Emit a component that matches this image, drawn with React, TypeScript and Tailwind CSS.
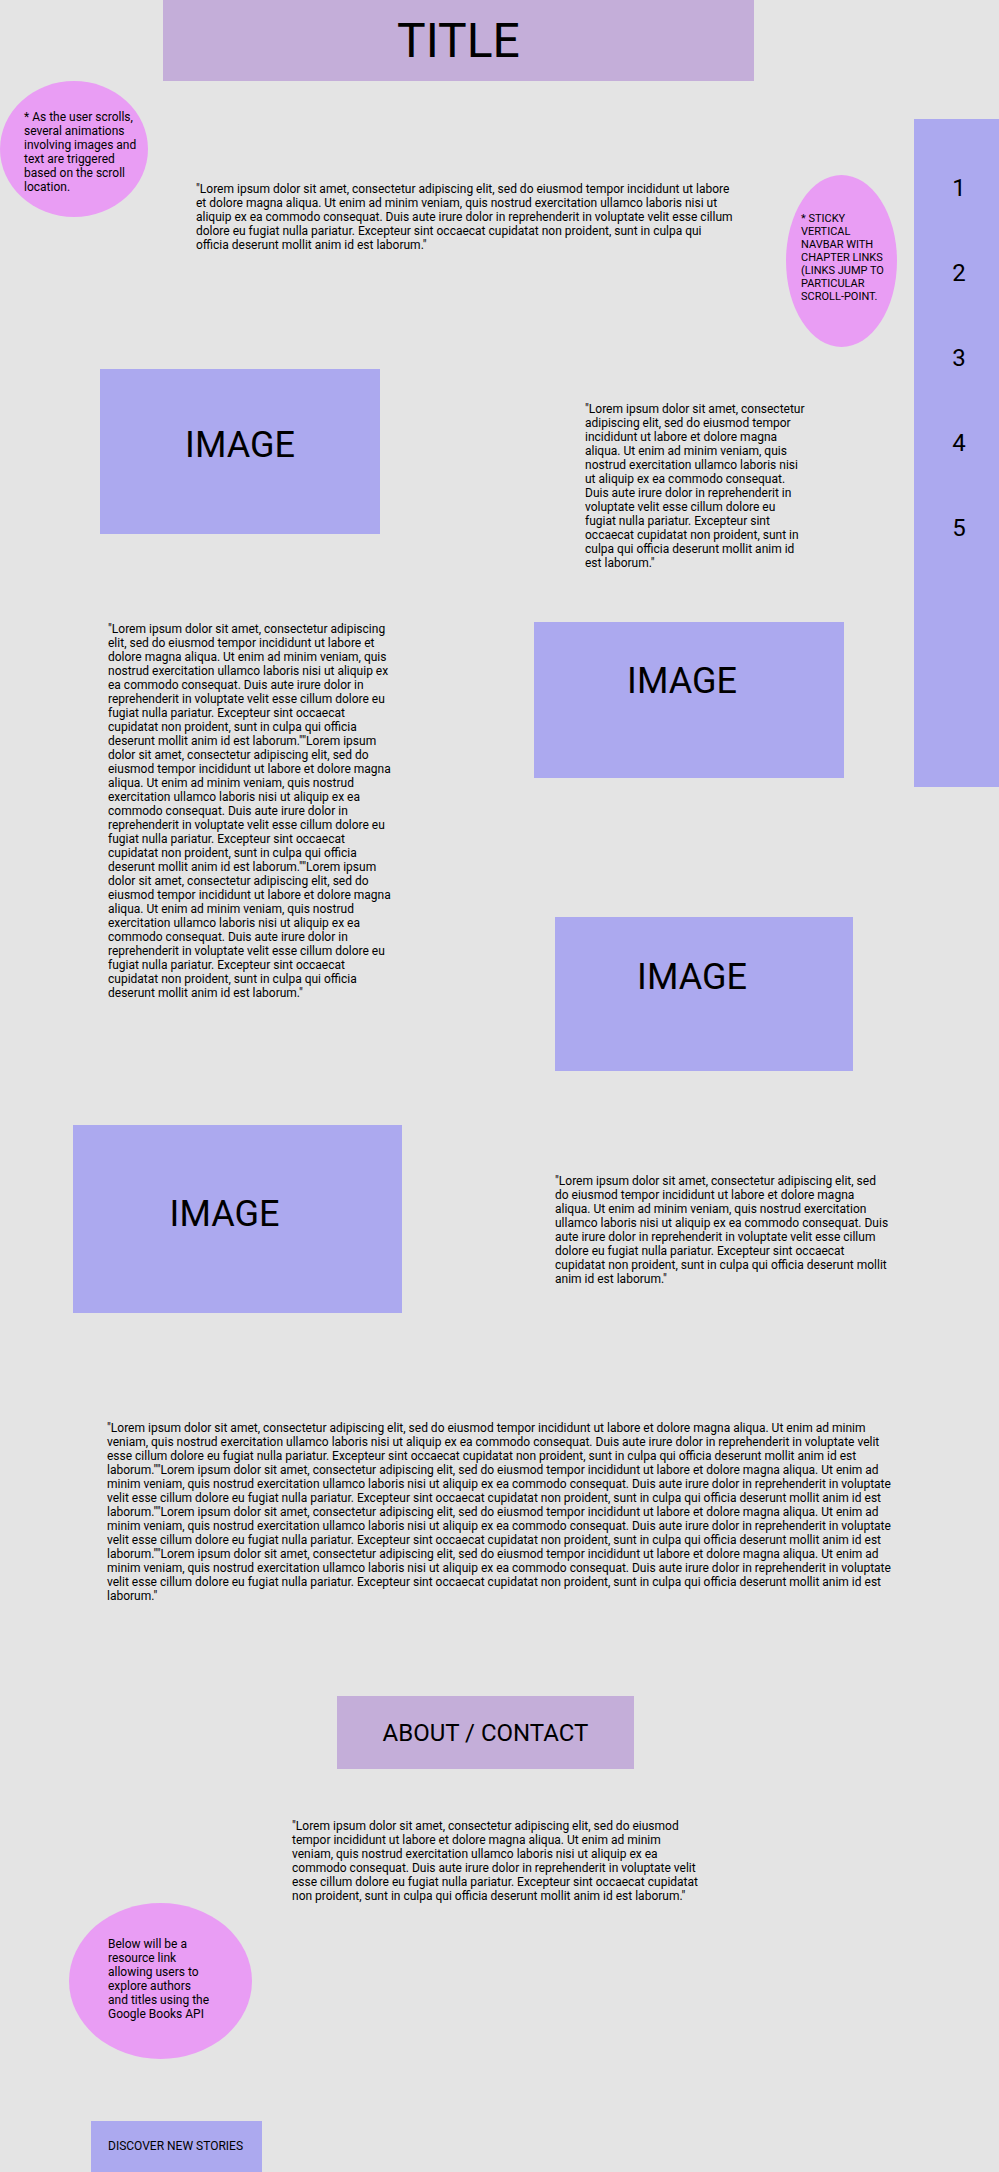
const LOREM =
  '"Lorem ipsum dolor sit amet, consectetur adipiscing elit, sed do eiusmod tempor incididunt ut labore et dolore magna aliqua. Ut enim ad minim veniam, quis nostrud exercitation ullamco laboris nisi ut aliquip ex ea commodo consequat. Duis aute irure dolor in reprehenderit in voluptate velit esse cillum dolore eu fugiat nulla pariatur. Excepteur sint occaecat cupidatat non proident, sunt in culpa qui officia deserunt mollit anim id est laborum."'

const chapters = ["1", "2", "3", "4", "5"]

export default function App() {
  return (
    <div className="relative h-[2172px] w-full overflow-hidden bg-[#e4e4e4] font-['Roboto',sans-serif] text-black">
      {/* sticky chapter nav */}
      <nav className="absolute right-0 top-[119px] flex h-[668px] w-[85px] flex-col items-center gap-[57px] bg-[#aca9ef] pl-[5px] pt-[55px]">
        {chapters.map((c) => (
          <a key={c} href={`#chapter-${c}`} className="text-[24px] leading-[28px]">
            {c}
          </a>
        ))}
      </nav>

      <header className="ml-[163px] flex h-[81px] w-[591px] items-center justify-center bg-[#c4aed9]">
        <h1 className="text-[48px] leading-none">TITLE</h1>
      </header>

      <div className="flex items-start">
        <div className="h-[136px] w-[148px] shrink-0 rounded-[50%] bg-[#e99df4] pl-[24px] pt-[29px]">
          <p className="w-[116px] text-[12px] leading-[14px]">
            * As the user scrolls, several animations involving images and text are triggered based on the scroll
            location.
          </p>
        </div>
        <p className="ml-[48px] mt-[101px] w-[540px] shrink-0 text-[12px] leading-[14px]">{LOREM}</p>
        <div className="ml-[50px] mt-[94px] h-[172px] w-[111px] shrink-0 rounded-[50%] bg-[#e99df4] pl-[15px] pt-[37px]">
          <p className="w-[85px] text-[11px] leading-[13px]">
            * STICKY VERTICAL NAVBAR WITH CHAPTER LINKS (LINKS JUMP TO PARTICULAR SCROLL-POINT.
          </p>
        </div>
      </div>

      <div id="chapter-1" className="mt-[22px] flex items-start">
        <div className="ml-[100px] flex h-[165px] w-[280px] shrink-0 items-center justify-center bg-[#aca9ef] pb-[14px] text-[36px]">
          IMAGE
        </div>
        <p className="ml-[205px] mt-[33px] w-[224px] shrink-0 text-[12px] leading-[14px]">{LOREM}</p>
      </div>

      <div id="chapter-2" className="mt-[52px] flex items-start">
        <p className="ml-[108px] w-[285px] shrink-0 text-[12px] leading-[14px]">
          {LOREM}
          {LOREM}
          {LOREM}
        </p>
        <div className="ml-[141px] flex flex-col items-start">
          <div className="flex h-[156px] w-[310px] items-center justify-center bg-[#aca9ef] pb-[38px] pr-[14px] text-[36px]">
            IMAGE
          </div>
          <div className="ml-[21px] mt-[139px] flex h-[154px] w-[298px] items-center justify-center bg-[#aca9ef] pb-[34px] pr-[24px] text-[36px]">
            IMAGE
          </div>
        </div>
      </div>

      <div id="chapter-3" className="mt-[54px] flex items-start">
        <div className="ml-[73px] flex h-[188px] w-[329px] shrink-0 items-center justify-center bg-[#aca9ef] pb-[10px] pr-[26px] text-[36px]">
          IMAGE
        </div>
        <p className="ml-[153px] mt-[49px] w-[334px] shrink-0 text-[12px] leading-[14px]">{LOREM}</p>
      </div>

      <p id="chapter-4" className="ml-[107px] mt-[108px] w-[786px] text-[12px] leading-[14px]">
        {LOREM}
        {LOREM}
        {LOREM}
        {LOREM}
      </p>

      <section id="chapter-5">
        <div className="ml-[337px] mt-[93px] flex h-[73px] w-[297px] items-center justify-center bg-[#c4aed9]">
          <h2 className="text-[24px] leading-none">ABOUT / CONTACT</h2>
        </div>

        <p className="ml-[292px] mt-[50px] w-[410px] text-[12px] leading-[14px]">{LOREM}</p>

        <div className="ml-[69px] h-[156px] w-[183px] rounded-[50%] bg-[#e99df4] pl-[39px] pt-[34px]">
          <p className="w-[102px] text-[12px] leading-[14px]">
            Below will be a resource link allowing users to explore authors and titles using the Google Books API
          </p>
        </div>

        <a
          href="#discover"
          className="ml-[91px] mt-[62px] block h-[60px] w-[171px] bg-[#aca9ef] pl-[17px] pt-[18px] text-[12px] leading-[14px]"
        >
          DISCOVER NEW STORIES
        </a>
      </section>
    </div>
  )
}
